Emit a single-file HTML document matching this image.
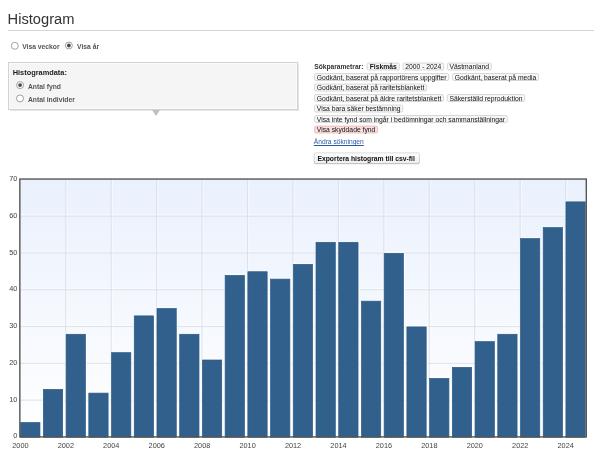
<!DOCTYPE html>
<html><head><meta charset="utf-8"><title>Histogram</title>
<style>
*{box-sizing:border-box;margin:0;padding:0}
html,body{width:602px;height:459px;overflow:hidden;background:#fff}
body{font-family:"Liberation Sans",sans-serif;color:#222;position:relative;font-size:6.667px}
#w{position:absolute;left:0;top:0;width:602px;height:459px;will-change:transform;transform:translateZ(0)}
h1{position:absolute;left:7.6px;top:10.5px;font-size:14.67px;font-weight:normal;color:#333;line-height:17px;letter-spacing:0}
.hr{position:absolute;left:8px;top:29.9px;width:586px;height:0.8px;background:#d6d6d6}
.radio{position:absolute;width:7.4px;height:7.4px;border:0.75px solid #808080;border-radius:50%;background:#fff}
.radio.on::after{content:"";position:absolute;left:1.15px;top:1.15px;width:3.6px;height:3.6px;border-radius:50%;background:#4a4a4a}
.rl{position:absolute;font-weight:bold;font-size:6.75px;color:#555;line-height:8px;white-space:nowrap}
.box{position:absolute;left:7.9px;top:61.9px;width:290px;height:47.9px;background:#f5f5f5;border:1.3px solid #d2d2d2;box-shadow:0.5px 0.5px 1px rgba(0,0,0,0.10), inset 0 0 0 0.8px rgba(255,255,255,0.75)}
.box b{position:absolute;left:3.8px;top:4.8px;font-size:7.4px;line-height:9px;color:#222}
.tri{position:absolute;left:152.3px;top:109.8px;width:0;height:0;border-left:4.4px solid transparent;border-right:4.4px solid transparent;border-top:6.2px solid #c0c0c0}
.params{position:absolute;left:314.2px;top:63.2px;transform:translateY(-0.4px);width:285px;font-size:6.667px;line-height:10.5px;white-space:nowrap}
.row{height:10.5px;white-space:nowrap;font-size:0}
.row > *{font-size:6.77px;vertical-align:top}
.row > .lbl{font-size:6.667px}
.lbl{display:inline-block;font-weight:bold;color:#333;line-height:7.6px;margin-right:3.4px}
.tag{display:inline-block;height:7.4px;line-height:6.2px;padding:0 1.6px;border:0.7px solid transparent;border-radius:1.7px;background:none;color:#111;margin-right:3px}
.tag.b{font-weight:bold}
.tag.red{}
.tag.b{padding:0 1.9px}

a.lnk{position:absolute;left:313.8px;top:137.9px;font-size:6.667px;line-height:8px;color:#2a5aa8;text-decoration:underline}
.btn{position:absolute;left:313.8px;top:152.5px;width:105.9px;height:11.4px;font-weight:bold;font-size:6.77px;line-height:11.6px;text-align:center;color:#111;white-space:nowrap;padding-right:1.2px}
.xl{position:absolute;top:440.7px;width:30px;text-align:center;font-size:7.333px;line-height:9px;color:#444}
.yl{position:absolute;left:0;width:17.4px;text-align:right;font-size:7.333px;line-height:9px;color:#444}
</style></head><body><div id="w">
<h1>Histogram</h1>
<div class="hr"></div>
<div class="rl" style="left:22.2px;top:42.6px">Visa veckor</div>
<div class="rl" style="left:77px;top:42.6px">Visa år</div>
<div class="box"><b>Histogramdata:</b></div>
<div class="rl" style="left:27.9px;top:83.1px">Antal fynd</div>
<div class="rl" style="left:27.9px;top:96px">Antal individer</div>
<div class="tri"></div>
<svg width="602" height="459" viewBox="0 0 602 459" style="position:absolute;left:0;top:0"><circle cx="14.8" cy="45.8" r="3.5" fill="#fff" stroke="#858585" stroke-width="0.75"/><circle cx="68.9" cy="45.5" r="3.5" fill="#fff" stroke="#858585" stroke-width="0.75"/><circle cx="68.9" cy="45.5" r="1.9" fill="#4a4a4a"/><circle cx="20.1" cy="85.1" r="3.5" fill="#fff" stroke="#858585" stroke-width="0.75"/><circle cx="20.1" cy="85.1" r="1.9" fill="#4a4a4a"/><circle cx="20" cy="98.5" r="3.5" fill="#fff" stroke="#858585" stroke-width="0.75"/></svg>
<svg width="602" height="459" viewBox="0 0 602 459" style="position:absolute;left:0;top:0"><rect x="367.15" y="63.10" width="32.17" height="6.9" rx="1.6" fill="#f8f8f8" stroke="#c9c9c9" stroke-width="0.75"/><rect x="403.02" y="63.10" width="40.61" height="6.9" rx="1.6" fill="#f8f8f8" stroke="#c9c9c9" stroke-width="0.75"/><rect x="447.33" y="63.10" width="43.99" height="6.9" rx="1.6" fill="#f8f8f8" stroke="#c9c9c9" stroke-width="0.75"/><rect x="314.54" y="73.60" width="134.25" height="6.9" rx="1.6" fill="#f8f8f8" stroke="#c9c9c9" stroke-width="0.75"/><rect x="452.49" y="73.60" width="86.11" height="6.9" rx="1.6" fill="#f8f8f8" stroke="#c9c9c9" stroke-width="0.75"/><rect x="314.54" y="84.10" width="112.05" height="6.9" rx="1.6" fill="#f8f8f8" stroke="#c9c9c9" stroke-width="0.75"/><rect x="314.54" y="94.60" width="128.97" height="6.9" rx="1.6" fill="#f8f8f8" stroke="#c9c9c9" stroke-width="0.75"/><rect x="447.21" y="94.60" width="77.46" height="6.9" rx="1.6" fill="#f8f8f8" stroke="#c9c9c9" stroke-width="0.75"/><rect x="314.54" y="105.10" width="88.24" height="6.9" rx="1.6" fill="#f8f8f8" stroke="#c9c9c9" stroke-width="0.75"/><rect x="314.54" y="115.60" width="192.78" height="6.9" rx="1.6" fill="#f8f8f8" stroke="#c9c9c9" stroke-width="0.75"/><rect x="314.54" y="126.10" width="63.05" height="6.9" rx="1.6" fill="#fcdede" stroke="#e2b0b0" stroke-width="0.75"/></svg>
<div class="params">
<div class="row r1"><span class="lbl">Sökparametrar:</span><span class="tag b">Fiskmås</span><span class="tag">2000 - 2024</span><span class="tag">Västmanland</span></div>
<div class="row"><span class="tag">Godkänt, baserat på rapportörens uppgifter</span><span class="tag">Godkänt, baserat på media</span></div>
<div class="row"><span class="tag">Godkänt, baserat på raritetsblankett</span></div>
<div class="row"><span class="tag">Godkänt, baserat på äldre raritetsblankett</span><span class="tag">Säkerställd reproduktion</span></div>
<div class="row"><span class="tag">Visa bara säker bestämning</span></div>
<div class="row"><span class="tag wide">Visa inte fynd som ingår i bedömningar och sammanställningar</span></div>
<div class="row"><span class="tag red">Visa skyddade fynd</span></div>
</div>
<a class="lnk">Ändra sökningen</a>
<svg width="602" height="459" viewBox="0 0 602 459" style="position:absolute;left:0;top:0"><defs><linearGradient id="bt" x1="0" y1="0" x2="0" y2="1"><stop offset="0" stop-color="#ffffff"/><stop offset="1" stop-color="#ededed"/></linearGradient><linearGradient id="bs" x1="0" y1="0" x2="0" y2="1"><stop offset="0" stop-color="#d2d2d2"/><stop offset="0.7" stop-color="#cacaca"/><stop offset="1" stop-color="#ababab"/></linearGradient></defs><rect x="314.2" y="152.9" width="105.3" height="10.8" rx="1.8" fill="url(#bt)" stroke="url(#bs)" stroke-width="0.8"/></svg>
<div class="btn">Exportera histogram till csv-fil</div>
<svg width="602" height="459" viewBox="0 0 602 459" style="position:absolute;left:0;top:0">
<defs><linearGradient id="bg" x1="0" y1="0" x2="0" y2="1"><stop offset="0" stop-color="#eaf1fd"/><stop offset="1" stop-color="#ffffff"/></linearGradient></defs>
<rect x="19.85" y="179.05" width="566.45" height="257.85" fill="url(#bg)"/>
<path d="M67.04 179.05 V436.9 M112.48 179.05 V436.9 M157.92 179.05 V436.9 M203.36 179.05 V436.9 M248.80 179.05 V436.9 M294.24 179.05 V436.9 M339.68 179.05 V436.9 M385.12 179.05 V436.9 M430.56 179.05 V436.9 M476.00 179.05 V436.9 M521.44 179.05 V436.9 M566.88 179.05 V436.9 M19.85 398.82 H586.3 M19.85 362.04 H586.3 M19.85 325.26 H586.3 M19.85 288.48 H586.3 M19.85 251.70 H586.3 M19.85 214.92 H586.3" stroke="#ffffff" stroke-width="1.1" fill="none" opacity="0.45"/>
<path d="M65.74 179.05 V436.9 M111.18 179.05 V436.9 M156.62 179.05 V436.9 M202.06 179.05 V436.9 M247.50 179.05 V436.9 M292.94 179.05 V436.9 M338.38 179.05 V436.9 M383.82 179.05 V436.9 M429.26 179.05 V436.9 M474.70 179.05 V436.9 M520.14 179.05 V436.9 M565.58 179.05 V436.9 M19.85 400.12 H586.3 M19.85 363.34 H586.3 M19.85 326.56 H586.3 M19.85 289.78 H586.3 M19.85 253.00 H586.3 M19.85 216.22 H586.3" stroke="#dadde6" stroke-width="0.85" fill="none"/>
<rect x="19.80" y="421.59" width="21.60" height="15.31" fill="#ffffff" opacity="0.85"/>
<rect x="20.65" y="422.54" width="19.30" height="14.71" fill="#31608d" stroke="#2b5986" stroke-width="0.7"/>
<rect x="42.52" y="388.49" width="21.60" height="48.41" fill="#ffffff" opacity="0.85"/>
<rect x="43.37" y="389.44" width="19.30" height="47.81" fill="#31608d" stroke="#2b5986" stroke-width="0.7"/>
<rect x="65.24" y="333.32" width="21.60" height="103.58" fill="#ffffff" opacity="0.85"/>
<rect x="66.09" y="334.27" width="19.30" height="102.98" fill="#31608d" stroke="#2b5986" stroke-width="0.7"/>
<rect x="87.96" y="392.16" width="21.60" height="44.74" fill="#ffffff" opacity="0.85"/>
<rect x="88.81" y="393.11" width="19.30" height="44.14" fill="#31608d" stroke="#2b5986" stroke-width="0.7"/>
<rect x="110.68" y="351.71" width="21.60" height="85.19" fill="#ffffff" opacity="0.85"/>
<rect x="111.53" y="352.66" width="19.30" height="84.59" fill="#31608d" stroke="#2b5986" stroke-width="0.7"/>
<rect x="133.40" y="314.93" width="21.60" height="121.97" fill="#ffffff" opacity="0.85"/>
<rect x="134.25" y="315.88" width="19.30" height="121.37" fill="#31608d" stroke="#2b5986" stroke-width="0.7"/>
<rect x="156.12" y="307.57" width="21.60" height="129.33" fill="#ffffff" opacity="0.85"/>
<rect x="156.97" y="308.52" width="19.30" height="128.73" fill="#31608d" stroke="#2b5986" stroke-width="0.7"/>
<rect x="178.84" y="333.32" width="21.60" height="103.58" fill="#ffffff" opacity="0.85"/>
<rect x="179.69" y="334.27" width="19.30" height="102.98" fill="#31608d" stroke="#2b5986" stroke-width="0.7"/>
<rect x="201.56" y="359.06" width="21.60" height="77.84" fill="#ffffff" opacity="0.85"/>
<rect x="202.41" y="360.01" width="19.30" height="77.24" fill="#31608d" stroke="#2b5986" stroke-width="0.7"/>
<rect x="224.28" y="274.47" width="21.60" height="162.43" fill="#ffffff" opacity="0.85"/>
<rect x="225.13" y="275.42" width="19.30" height="161.83" fill="#31608d" stroke="#2b5986" stroke-width="0.7"/>
<rect x="247.00" y="270.79" width="21.60" height="166.11" fill="#ffffff" opacity="0.85"/>
<rect x="247.85" y="271.74" width="19.30" height="165.51" fill="#31608d" stroke="#2b5986" stroke-width="0.7"/>
<rect x="269.72" y="278.15" width="21.60" height="158.75" fill="#ffffff" opacity="0.85"/>
<rect x="270.57" y="279.10" width="19.30" height="158.15" fill="#31608d" stroke="#2b5986" stroke-width="0.7"/>
<rect x="292.44" y="263.43" width="21.60" height="173.47" fill="#ffffff" opacity="0.85"/>
<rect x="293.29" y="264.38" width="19.30" height="172.87" fill="#31608d" stroke="#2b5986" stroke-width="0.7"/>
<rect x="315.16" y="241.37" width="21.60" height="195.53" fill="#ffffff" opacity="0.85"/>
<rect x="316.01" y="242.32" width="19.30" height="194.93" fill="#31608d" stroke="#2b5986" stroke-width="0.7"/>
<rect x="337.88" y="241.37" width="21.60" height="195.53" fill="#ffffff" opacity="0.85"/>
<rect x="338.73" y="242.32" width="19.30" height="194.93" fill="#31608d" stroke="#2b5986" stroke-width="0.7"/>
<rect x="360.60" y="300.21" width="21.60" height="136.69" fill="#ffffff" opacity="0.85"/>
<rect x="361.45" y="301.16" width="19.30" height="136.09" fill="#31608d" stroke="#2b5986" stroke-width="0.7"/>
<rect x="383.32" y="252.40" width="21.60" height="184.50" fill="#ffffff" opacity="0.85"/>
<rect x="384.17" y="253.35" width="19.30" height="183.90" fill="#31608d" stroke="#2b5986" stroke-width="0.7"/>
<rect x="406.04" y="325.96" width="21.60" height="110.94" fill="#ffffff" opacity="0.85"/>
<rect x="406.89" y="326.91" width="19.30" height="110.34" fill="#31608d" stroke="#2b5986" stroke-width="0.7"/>
<rect x="428.76" y="377.45" width="21.60" height="59.45" fill="#ffffff" opacity="0.85"/>
<rect x="429.61" y="378.40" width="19.30" height="58.85" fill="#31608d" stroke="#2b5986" stroke-width="0.7"/>
<rect x="451.48" y="366.42" width="21.60" height="70.48" fill="#ffffff" opacity="0.85"/>
<rect x="452.33" y="367.37" width="19.30" height="69.88" fill="#31608d" stroke="#2b5986" stroke-width="0.7"/>
<rect x="474.20" y="340.67" width="21.60" height="96.23" fill="#ffffff" opacity="0.85"/>
<rect x="475.05" y="341.62" width="19.30" height="95.63" fill="#31608d" stroke="#2b5986" stroke-width="0.7"/>
<rect x="496.92" y="333.32" width="21.60" height="103.58" fill="#ffffff" opacity="0.85"/>
<rect x="497.77" y="334.27" width="19.30" height="102.98" fill="#31608d" stroke="#2b5986" stroke-width="0.7"/>
<rect x="519.64" y="237.69" width="21.60" height="199.21" fill="#ffffff" opacity="0.85"/>
<rect x="520.49" y="238.64" width="19.30" height="198.61" fill="#31608d" stroke="#2b5986" stroke-width="0.7"/>
<rect x="542.36" y="226.65" width="21.60" height="210.25" fill="#ffffff" opacity="0.85"/>
<rect x="543.21" y="227.60" width="19.30" height="209.65" fill="#31608d" stroke="#2b5986" stroke-width="0.7"/>
<rect x="565.08" y="200.91" width="21.60" height="235.99" fill="#ffffff" opacity="0.85"/>
<rect x="565.93" y="201.86" width="19.30" height="235.39" fill="#31608d" stroke="#2b5986" stroke-width="0.7"/>
<rect x="19.85" y="179.05" width="566.45" height="257.85" fill="none" stroke="#555555" stroke-width="1.4"/>
</svg>
<div class="xl" style="left:5.40px">2000</div>
<div class="xl" style="left:50.84px">2002</div>
<div class="xl" style="left:96.28px">2004</div>
<div class="xl" style="left:141.72px">2006</div>
<div class="xl" style="left:187.16px">2008</div>
<div class="xl" style="left:232.60px">2010</div>
<div class="xl" style="left:278.04px">2012</div>
<div class="xl" style="left:323.48px">2014</div>
<div class="xl" style="left:368.92px">2016</div>
<div class="xl" style="left:414.36px">2018</div>
<div class="xl" style="left:459.80px">2020</div>
<div class="xl" style="left:505.24px">2022</div>
<div class="xl" style="left:550.68px">2024</div>
<div class="yl" style="top:431.40px">0</div>
<div class="yl" style="top:394.62px">10</div>
<div class="yl" style="top:357.84px">20</div>
<div class="yl" style="top:321.06px">30</div>
<div class="yl" style="top:284.28px">40</div>
<div class="yl" style="top:247.50px">50</div>
<div class="yl" style="top:210.72px">60</div>
<div class="yl" style="top:173.94px">70</div>
</div></body></html>
